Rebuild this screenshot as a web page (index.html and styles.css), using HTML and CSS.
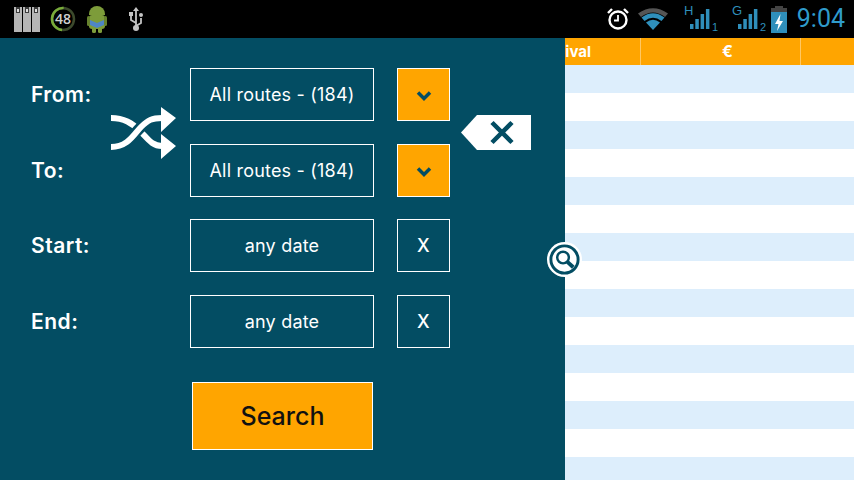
FILE: index.html
```html
<!DOCTYPE html>
<html>
<head>
    <meta charset="utf-8">
    <title>Search routes</title>
    <link rel="stylesheet" href="styles.css">
</head>
<body>
<div id="statusbar">
    <div class="status-left">
        <svg class="ic-sd" width="26" height="25" viewBox="0 0 26 25">
            <path fill="#b5b5b5" d="M0 0h8v25H0zM9 0h8v25H9zM18 0h8v25h-8z"/>
            <path fill="#3c3c3c" d="M2 0h4v6H2zM11 0h4v6h-4zM20 0h4v6h-4z"/>
            <path fill="#ddd" d="M3 2h2v3H3zM12 2h2v3h-2zM21 2h2v3h-2z"/>
        </svg>
        <svg class="ic-ring" width="26" height="26" viewBox="0 0 26 26">
            <circle cx="13" cy="13" r="11" fill="none" stroke="#3c4a2c" stroke-width="2.500"/>
            <circle cx="13" cy="13" r="11" fill="none" stroke="#79ac3a" stroke-width="2.500" stroke-dasharray="34 70" transform="rotate(95 13 13)"/>
            <text x="13" y="18" class="ring-text">48</text>
        </svg>
        <svg class="ic-droid" width="20" height="27" viewBox="0 0 20 27">
            <path fill="#7d9c3a" d="M2 8a8 8 0 0 1 16 0v1H2z"/>
            <rect fill="#7d9c3a" x="2" y="9" width="16" height="14" rx="3"/>
            <rect fill="#66822e" x="0" y="10" width="3" height="10" rx="1.500"/>
            <rect fill="#66822e" x="17" y="10" width="3" height="10" rx="1.500"/>
            <rect fill="#7d9c3a" x="5" y="21" width="4" height="6" rx="1.500"/>
            <rect fill="#7d9c3a" x="11" y="21" width="4" height="6" rx="1.500"/>
            <path fill="#4f86c6" d="M3 14l7 3 7-3v5l-7 3-7-3z"/>
        </svg>
        <svg class="ic-usb" width="16" height="24" viewBox="0 0 16 24" fill="none" stroke="#c4c4c4" stroke-width="1.800">
            <path d="M8 3v18M8 16l-5-3V8M8 19l5-3v-5"/>
            <path fill="#c4c4c4" stroke="none" d="M8 0l3 4H5zM1 5h4v4H1z"/>
            <circle fill="#c4c4c4" stroke="none" cx="13" cy="8" r="2"/>
            <circle fill="#c4c4c4" stroke="none" cx="8" cy="21" r="3"/>
        </svg>
    </div>
    <div class="status-right">
        <svg class="ic-alarm" width="24" height="24" viewBox="0 0 24 24" fill="none" stroke="#fff">
            <circle cx="12" cy="13" r="8.500" stroke-width="2.400"/>
            <path stroke-width="1.800" d="M12 8v5.500H8"/>
            <path stroke-width="2.400" d="M2 6l4-4M22 6l-4-4"/>
        </svg>
        <svg class="ic-wifi" width="30" height="24" viewBox="0 0 30 24">
            <path fill="#555" d="M0 6.500Q15-4 30 6.500L27 10Q15 1 3 10z"/>
            <path fill="#2f8fbb" d="M3.500 10.500Q15 2 26.500 10.500L23.500 14Q15 7.500 6.500 14zM8 15.500Q15 10 22 15.500L15 23z"/>
        </svg>
        <svg class="ic-sig ic-sig1" width="36" height="38" viewBox="0 -5 36 38" fill="#2f8fbb">
            <rect x="6" y="19" width="3.500" height="5"/><rect x="11.300" y="14" width="3.500" height="10"/><rect x="16.600" y="9" width="3.500" height="15"/><rect x="21.900" y="4" width="3.500" height="20"/>
            <text x="0" y="10" class="sig-label">H</text><text x="28" y="26" class="sig-label sig-num">1</text>
        </svg>
        <svg class="ic-sig ic-sig2" width="36" height="38" viewBox="0 -5 36 38" fill="#2f8fbb">
            <rect x="6" y="19" width="3.500" height="5"/><rect x="11.300" y="14" width="3.500" height="10"/><rect x="16.600" y="9" width="3.500" height="15"/><rect x="21.900" y="4" width="3.500" height="20"/>
            <text x="0" y="10" class="sig-label">G</text><text x="28" y="26" class="sig-label sig-num">2</text>
        </svg>
        <svg class="ic-batt" width="16" height="27" viewBox="0 0 16 27">
            <path fill="#444" d="M4 0h8v2h4v4H0V2h4z"/>
            <path fill="#2f8fbb" d="M0 6h16v21H0z"/>
            <path fill="#fff" d="M9.500 8L4 18h3.500L6 25l6-10H8.500z"/>
        </svg>
        <span class="clock">9:04</span>
    </div>
</div>

<div id="main">
    <div id="table">
        <div class="thead">
            <div class="th th-arrival">ival</div>
            <div class="th th-price">€</div>
            <div class="th th-last"></div>
        </div>
        <div class="stripes">
            <div class="tr"></div><div class="tr"></div><div class="tr"></div><div class="tr"></div>
            <div class="tr"></div><div class="tr"></div><div class="tr"></div><div class="tr"></div>
            <div class="tr"></div><div class="tr"></div><div class="tr"></div><div class="tr"></div>
            <div class="tr"></div><div class="tr"></div><div class="tr"></div>
        </div>
    </div>

    <div id="panel">
        <div class="row">
            <div class="label">From:</div>
            <div class="field">All routes - (184)</div>
            <div class="btn btn-orange">
                <svg width="16" height="12" viewBox="0 0 16 12" fill="none" stroke="#034d63" stroke-width="3.500"><path d="M2 2.500l6 6 6-6"/></svg>
            </div>
        </div>
        <div class="row">
            <div class="label">To:</div>
            <div class="field">All routes - (184)</div>
            <div class="btn btn-orange">
                <svg width="16" height="12" viewBox="0 0 16 12" fill="none" stroke="#034d63" stroke-width="3.500"><path d="M2 2.500l6 6 6-6"/></svg>
            </div>
        </div>
        <div class="row">
            <div class="label">Start:</div>
            <div class="field">any date</div>
            <div class="btn">X</div>
        </div>
        <div class="row">
            <div class="label">End:</div>
            <div class="field">any date</div>
            <div class="btn">X</div>
        </div>
        <div class="search">Search</div>

        <!-- swap from/to -->
        <svg class="swap" width="67" height="53" viewBox="0 0 67 53" fill="none" stroke-width="6">
            <path stroke="#fff" d="M1 11C14 11 22 16 30 24S42 39 52 39"/>
            <path stroke="#034d63" stroke-width="11" d="M14 36C20 33 24 27 31 20"/>
            <path stroke="#fff" d="M1 40C18 40 24 27 31 20S42 11 52 11"/>
            <path fill="#fff" d="M51 0l15 11-15 14zM51 27l15 12-15 13z"/>
        </svg>

        <!-- clear -->
        <svg class="clear" width="70" height="35" viewBox="0 0 70 35">
            <path fill="#fff" d="M16 0h54v35H16L0 17.500z"/>
            <path fill="none" stroke="#034d63" stroke-width="4.500" d="M31 7.500l20 20M51 7.500l-20 20"/>
        </svg>

        <!-- panel handle -->
        <svg class="handle" width="35" height="35" viewBox="0 0 36 36">
            <circle cx="18" cy="18" r="18" fill="#fff"/>
            <circle cx="18" cy="18" r="14" fill="none" stroke="#034d63" stroke-width="3"/>
            <circle cx="16.500" cy="16" r="6" fill="none" stroke="#034d63" stroke-width="2.500"/>
            <path stroke="#034d63" stroke-width="4" d="M21 20.500l6 5.500"/>
        </svg>
    </div>
</div>
</body>
</html>
```

FILE: styles.css
```css
html, body {
    margin: 0;
    padding: 0;
}
body {
    width: 854px;
    height: 480px;
    overflow: hidden;
    background: #fff;
    font-family: Inter, "Open Sans", sans-serif;
}

/* status bar */
#statusbar {
    height: 38px;
    background: #000;
    display: flex;
    justify-content: space-between;
    align-items: center;
}
.status-left {
    display: flex;
    align-items: center;
    padding-left: 14px;
}
.ring-text {
    fill: #cfcfcf;
    font-family: "Open Sans", sans-serif;
    font-size: 14px;
    font-weight: 600;
    text-anchor: middle;
}
.ic-ring {
    margin-left: 10px;
}
.ic-droid {
    margin-left: 11px;
}
.ic-usb {
    margin-left: 21px;
}
.status-right {
    display: flex;
    align-items: center;
    padding-right: 9px;
}
.ic-wifi {
    margin-left: 8px;
}
.ic-sig1 {
    margin-left: 16px;
}
.ic-sig2 {
    margin-left: 12px;
}
.ic-batt {
    margin-left: 3px;
}
.sig-label {
    font-family: "Liberation Sans", sans-serif;
    font-size: 13px;
}
.sig-num {
    font-size: 11px;
}
.clock {
    margin-left: 10px;
    color: #2f9bcb;
    font-family: Roboto, sans-serif;
    font-size: 25px;
    line-height: 28px;
}

/* main area */
#main {
    display: flex;
    flex-direction: row-reverse;
    height: 442px;
}

/* table behind the panel */
#table {
    flex: 1;
    overflow: hidden;
}
.thead {
    display: flex;
    height: 27px;
    background: #ffa500;
    color: #fff;
    font-size: 15px;
    font-weight: 700;
    line-height: 27px;
}
.th {
    box-sizing: border-box;
    border-right: 1px solid #ffc864;
    text-align: center;
}
.th-arrival {
    flex: 0 0 76px;
    padding-right: 49px;
    text-align: right;
}
.th-price {
    flex: 0 0 160px;
    padding-left: 14px;
    font-size: 16px;
}
.th-last {
    flex: 1;
    border-right: 0;
}
.tr {
    height: 28px;
}
.tr:nth-child(odd) {
    background: #ddeefc;
}

/* search panel */
#panel {
    position: relative;
    width: 565px;
    box-sizing: border-box;
    padding: 30px 0 0 31px;
    background: #034d63;
    color: #fff;
}
.row {
    display: flex;
    align-items: center;
    height: 53px;
    margin-bottom: 22.700px;
}
.label {
    width: 159px;
    font-size: 21px;
    font-weight: 600;
    letter-spacing: 0.500px;
}
.field, .btn {
    box-sizing: border-box;
    height: 53px;
    border: 1px solid #fff;
    display: flex;
    align-items: center;
    justify-content: center;
    font-size: 18px;
    letter-spacing: 0.200px;
}
.field {
    width: 184px;
}
.btn {
    width: 53px;
    margin-left: 23px;
    font-weight: 500;
}
.btn-orange {
    background: #ffa500;
}
.btn-orange svg {
    margin-top: 3px;
}
.search {
    box-sizing: border-box;
    width: 181px;
    height: 68px;
    margin: 34px 0 0 161px;
    border: 1px solid #fff;
    background: #ffa500;
    color: #111;
    font-size: 25px;
    font-weight: 500;
    line-height: 66px;
    text-align: center;
}

/* things lying over the panel */
.swap {
    position: absolute;
    left: 110px;
    top: 69px;
}
.clear {
    position: absolute;
    left: 461px;
    top: 77px;
}
.handle {
    position: absolute;
    left: 547px;
    top: 204px;
}
```
